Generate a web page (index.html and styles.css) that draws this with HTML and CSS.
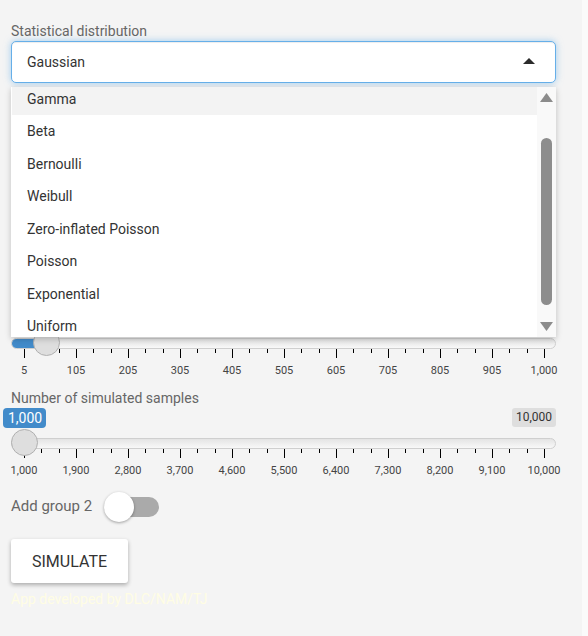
FILE: index.html
```html
<!DOCTYPE html>
<html lang="en">
<head>
<meta charset="utf-8">
<title>Simulation</title>
<link rel="stylesheet" href="styles.css">
</head>
<body>
<div class="app">
  <div class="group select-group">
    <label class="lbl">Statistical distribution</label>
    <div class="select">
      <span class="select-value">Gaussian</span>
      <svg class="caret" width="12" height="6" viewBox="0 0 12 6"><polygon points="0,6 6,0 12,6" fill="#2b2b2b"/></svg>
    </div>
    <div class="menu">
      <div class="menu-list">
        <div class="menu-inner">
          <div class="opt active">Gamma</div>
          <div class="opt">Beta</div>
          <div class="opt">Bernoulli</div>
          <div class="opt">Weibull</div>
          <div class="opt">Zero-inflated Poisson</div>
          <div class="opt">Poisson</div>
          <div class="opt">Exponential</div>
          <div class="opt">Uniform</div>
        </div>
      </div>
      <div class="menu-scroll">
        <svg class="arrow" width="13" height="9" viewBox="0 0 13 9"><polygon points="0,9 6.5,0 13,9" fill="#8c8c8c"/></svg>
        <div class="thumb"></div>
        <svg class="arrow down" width="13" height="9" viewBox="0 0 13 9"><polygon points="0,0 6.5,9 13,0" fill="#8c8c8c"/></svg>
      </div>
    </div>
  </div>

  <div class="irs irs-first">
    <div class="irs-badges"></div>
    <div class="irs-line"><div class="irs-bar" style="width:36px"></div></div>
    <div class="irs-handle" style="left:22px"></div>
    <div class="irs-ticks">
      <i class="t M"></i><i class="t"></i><i class="t"></i>
      <i class="t M"></i><i class="t"></i><i class="t"></i>
      <i class="t M"></i><i class="t"></i><i class="t"></i>
      <i class="t M"></i><i class="t"></i><i class="t"></i>
      <i class="t M"></i><i class="t"></i><i class="t"></i>
      <i class="t M"></i><i class="t"></i><i class="t"></i>
      <i class="t M"></i><i class="t"></i><i class="t"></i>
      <i class="t M"></i><i class="t"></i><i class="t"></i>
      <i class="t M"></i><i class="t"></i><i class="t"></i>
      <i class="t M"></i><i class="t"></i><i class="t"></i>
      <i class="t M last"></i>
    </div>
    <div class="irs-labels">
      <span>5</span><span>105</span><span>205</span><span>305</span><span>405</span><span>505</span><span>605</span><span>705</span><span>805</span><span>905</span><span>1,000</span>
    </div>
  </div>

  <label class="lbl lbl-samples">Number of simulated samples</label>
  <div class="irs">
    <div class="irs-badges">
      <span class="badge-single">1,000</span>
      <span class="badge-max">10,000</span>
    </div>
    <div class="irs-line"></div>
    <div class="irs-handle" style="left:0px"></div>
    <div class="irs-ticks">
      <i class="t M"></i><i class="t"></i><i class="t"></i>
      <i class="t M"></i><i class="t"></i><i class="t"></i>
      <i class="t M"></i><i class="t"></i><i class="t"></i>
      <i class="t M"></i><i class="t"></i><i class="t"></i>
      <i class="t M"></i><i class="t"></i><i class="t"></i>
      <i class="t M"></i><i class="t"></i><i class="t"></i>
      <i class="t M"></i><i class="t"></i><i class="t"></i>
      <i class="t M"></i><i class="t"></i><i class="t"></i>
      <i class="t M"></i><i class="t"></i><i class="t"></i>
      <i class="t M"></i><i class="t"></i><i class="t"></i>
      <i class="t M last"></i>
    </div>
    <div class="irs-labels">
      <span>1,000</span><span>1,900</span><span>2,800</span><span>3,700</span><span>4,600</span><span>5,500</span><span>6,400</span><span>7,300</span><span>8,200</span><span>9,100</span><span>10,000</span>
    </div>
  </div>

  <div class="toggle-row">
    <span class="lbl lbl-toggle">Add group 2</span>
    <span class="switch"><span class="switch-track"></span><span class="switch-knob"></span></span>
  </div>

  <button class="btn">Simulate</button>

  <div class="footer">App developed by DLC/NAM/TJ</div>
</div>
</body>
</html>
```

FILE: styles.css
```css
html, body {
  margin: 0;
  padding: 0;
  background: #fafafa;
}
body {
  font-family: Roboto, "Liberation Sans", Arial, sans-serif;
  font-size: 14px;
  color: #333;
}
.app {
  width: 582px;
  height: 636px;
  box-sizing: border-box;
  background: #f4f4f4;
  padding: 21px 0 0 11px;
  display: flex;
  flex-direction: column;
  align-items: flex-start;
  overflow: hidden;
}
.lbl {
  display: block;
  line-height: 20px;
  color: #666;
  font-size: 14px;
}
.select-group {
  position: relative;
  width: 545px;
}
.select {
  box-sizing: border-box;
  width: 545px;
  height: 42px;
  background: #fff;
  border: 1px solid #66afe9;
  border-radius: 5px;
  box-shadow: inset 0 1px 1px rgba(0,0,0,.075), 0 0 7px rgba(102,175,233,.6);
  display: flex;
  align-items: center;
  justify-content: space-between;
  padding: 0 20px 0 15px;
}
.select-value {
  font-size: 14px;
  color: #333;
  margin-top: -1px;
}
.caret {
  display: block;
  margin-top: -3px;
}
.menu {
  position: absolute;
  left: 0;
  top: 66px;
  width: 545px;
  height: 250px;
  background: #fff;
  box-shadow: 0 2px 6px rgba(0,0,0,.22);
  display: flex;
  z-index: 5;
}
.menu-list {
  flex: 1;
  overflow: hidden;
  padding-left: 1px;
}
.menu-inner {
  margin-top: -4.5px;
}
.opt {
  height: 32.5px;
  line-height: 32.5px;
  padding-left: 15px;
  color: #333;
  font-size: 14px;
}
.opt.active {
  background: #f3f3f3;
}
.menu-scroll {
  width: 19px;
  background: #f9f9f9;
  display: flex;
  flex-direction: column;
  align-items: center;
  padding-top: 6px;
  box-sizing: border-box;
}
.arrow {
  display: block;
  flex: none;
}
.thumb {
  width: 11px;
  height: 167px;
  margin-top: 36px;
  border-radius: 6px;
  background: #8d8d8d;
  flex: none;
}
.arrow.down {
  margin-top: 17px;
}

/* sliders */
.irs {
  position: relative;
  width: 545px;
}
.irs-first {
  margin-top: 225px;
}
.irs-badges {
  height: 20px;
  display: flex;
  justify-content: space-between;
  align-items: flex-start;
}
.badge-single {
  margin-left: -8px;
  background: #428bca;
  color: #fff;
  font-size: 14px;
  line-height: 18px;
  padding: 1px 4px 1px 5px;
  border-radius: 4px;
}
.badge-max {
  background: #dedede;
  color: #333;
  font-size: 12px;
  line-height: 17px;
  padding: 1px 4px;
  border-radius: 3px;
}
.irs-line {
  box-sizing: border-box;
  margin-top: 10px;
  height: 11px;
  border: 1px solid #cfcfcf;
  border-radius: 6px;
  background: linear-gradient(to bottom, #e4e4e4, #f8f8f8);
  overflow: hidden;
}
.irs-bar {
  height: 100%;
  background: #428bca;
}
.irs-handle {
  position: absolute;
  top: 21px;
  width: 27px;
  height: 27px;
  box-sizing: border-box;
  border: 1px solid #b0b0b0;
  border-radius: 50%;
  background: #dedede;
}
.irs-ticks {
  display: flex;
  align-items: flex-start;
  margin-left: 13px;
  width: 521px;
  height: 9px;
}
.t {
  flex: 1 1 0;
  height: 4px;
  border-left: 1px solid #000;
}
.t.M {
  height: 9px;
}
.t.last {
  flex: 0 0 0;
}
.irs-labels {
  display: grid;
  grid-template-columns: repeat(11, 52px);
  margin-left: -13px;
  margin-top: 6px;
  font-size: 11px;
  line-height: 14px;
  color: #444;
  text-align: center;
}

.lbl-samples {
  margin-top: 10px;
}

.toggle-row {
  margin-top: 14px;
  height: 30px;
  display: flex;
  align-items: center;
  gap: 12px;
}
.lbl-toggle {
  font-size: 15px;
  margin-top: -3px;
}
.switch {
  position: relative;
  width: 55px;
  height: 30px;
  display: flex;
  align-items: center;
}
.switch-track {
  width: 55px;
  height: 20px;
  border-radius: 10px;
  background: #aaa;
}
.switch-knob {
  position: absolute;
  left: 0;
  top: 0;
  width: 30px;
  height: 30px;
  border-radius: 50%;
  background: #fff;
  box-shadow: 0 1px 3px rgba(0,0,0,.35);
}

.btn {
  margin-top: 17px;
  width: 117px;
  height: 44px;
  border: none;
  border-radius: 3px;
  background: #fff;
  box-shadow: 0 2px 4px rgba(0,0,0,.3);
  font-family: Roboto, "Liberation Sans", Arial, sans-serif;
  font-size: 16px;
  color: #333;
  text-transform: uppercase;
  padding: 0;
}
.footer {
  margin-top: 6px;
  line-height: 20px;
  font-size: 14px;
  color: #fffde4;
}
```
